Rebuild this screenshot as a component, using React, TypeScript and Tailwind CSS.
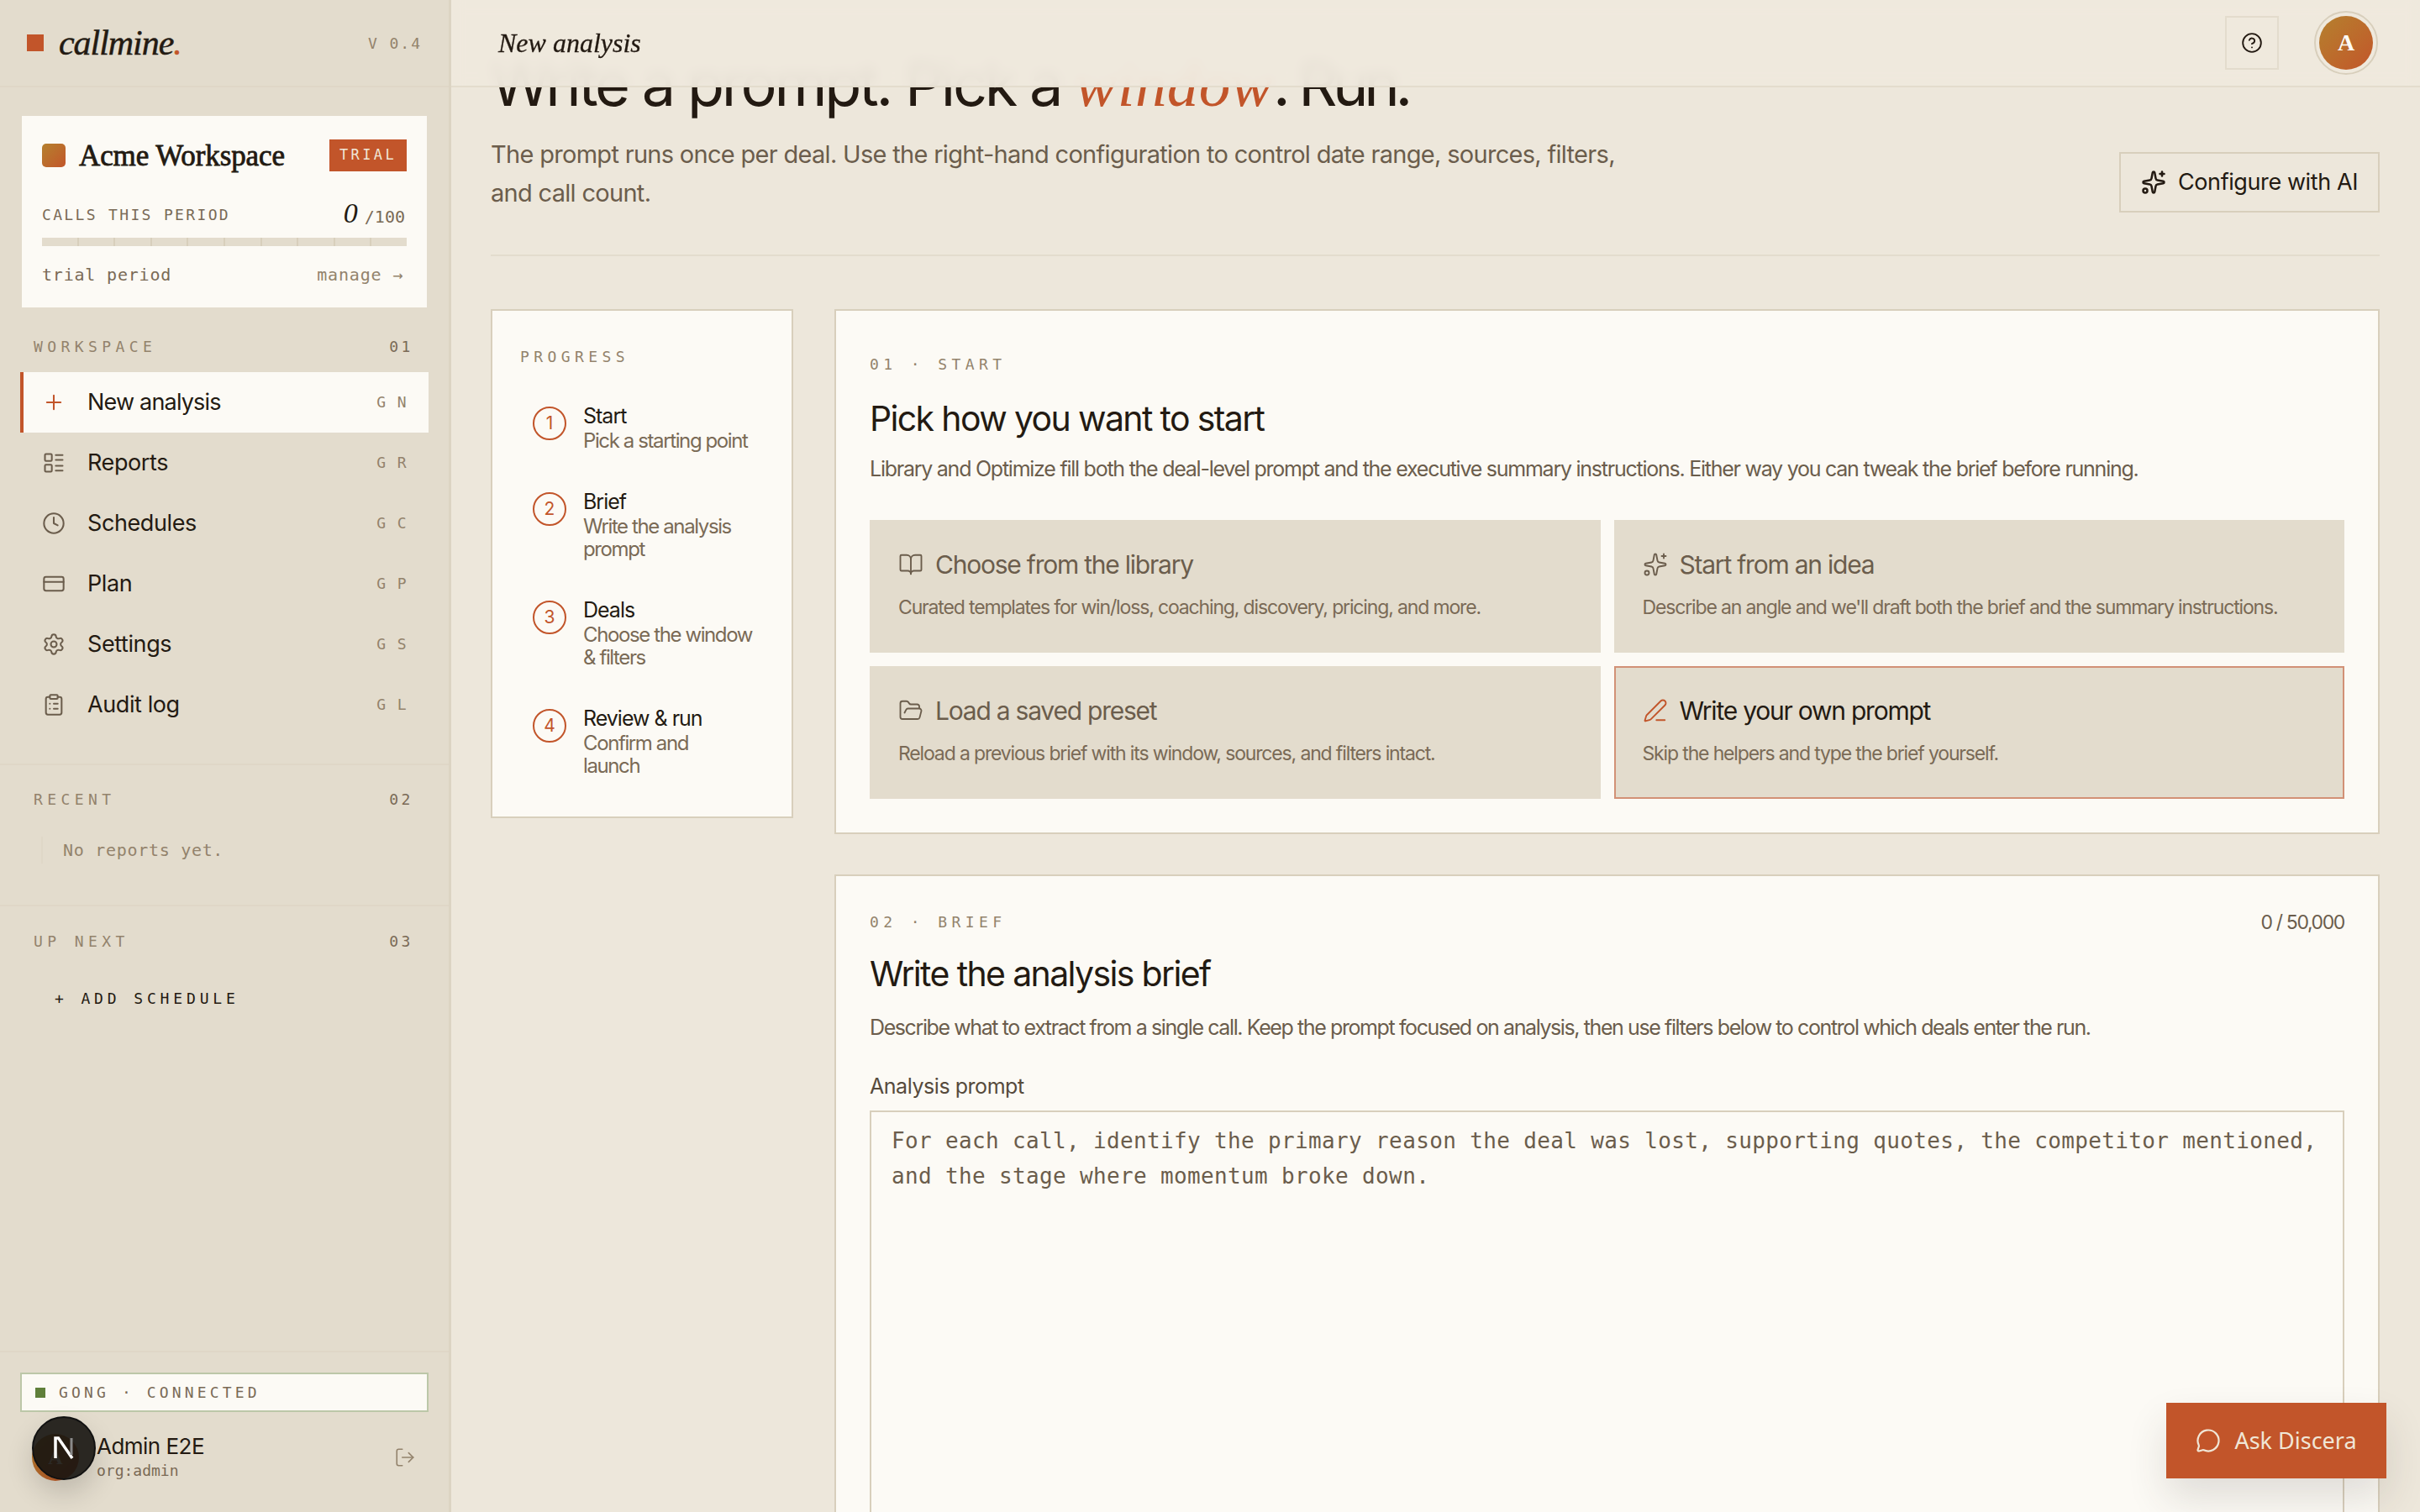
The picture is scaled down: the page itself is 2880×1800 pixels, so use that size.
import React from "react";
import {
  BookOpen,
  CircleHelp,
  ClipboardList,
  Clock,
  CreditCard,
  FolderOpen,
  LayoutList,
  LogOut,
  MessageCircle,
  PenLine,
  Plus,
  Settings,
  Sparkles,
} from "lucide-react";

const navItems = [
  { label: "Reports", keys: "G R", icon: LayoutList },
  { label: "Schedules", keys: "G C", icon: Clock },
  { label: "Plan", keys: "G P", icon: CreditCard },
  { label: "Settings", keys: "G S", icon: Settings },
  { label: "Audit log", keys: "G L", icon: ClipboardList },
];

const steps = [
  { n: 1, title: "Start", lines: ["Pick a starting point"] },
  { n: 2, title: "Brief", lines: ["Write the analysis", "prompt"] },
  { n: 3, title: "Deals", lines: ["Choose the window", "& filters"] },
  { n: 4, title: "Review & run", lines: ["Confirm and", "launch"] },
];

const options = [
  {
    title: "Choose from the library",
    text: "Curated templates for win/loss, coaching, discovery, pricing, and more.",
    icon: BookOpen,
  },
  {
    title: "Start from an idea",
    text: "Describe an angle and we'll draft both the brief and the summary instructions.",
    icon: Sparkles,
  },
  {
    title: "Load a saved preset",
    text: "Reload a previous brief with its window, sources, and filters intact.",
    icon: FolderOpen,
  },
  {
    title: "Write your own prompt",
    text: "Skip the helpers and type the brief yourself.",
    icon: PenLine,
    active: true,
  },
];

const SectionLabel = ({ label, num }: { label: string; num: string }) => (
  <div className="flex items-center justify-between pl-[40px] pr-[42px] font-['DejaVu_Sans_Mono'] text-[18px] leading-[24px] text-[#93836c]">
    <span className="tracking-[0.3em]">{label}</span>
    <span className="tracking-[0.2em] text-[#7a6a56]">{num}</span>
  </div>
);

const Sidebar = () => (
  <aside className="flex h-full w-[537px] shrink-0 flex-col border-r-[3px] border-[#dcd4c3] bg-[#e3dccd] font-['Inter']">
    <div className="flex h-[104px] shrink-0 items-center justify-between border-b-2 border-[#dfd7c7] pl-[32px] pr-[32px]">
      <div className="flex items-center gap-[18px]">
        <span className="h-[20px] w-[20px] bg-[#c2552a]" />
        <span className="font-['Liberation_Serif'] text-[42px] leading-none italic tracking-[-0.025em] text-[#231a12] [-webkit-text-stroke:0.5px_#231a12]">
          callmine<span className="text-[#c2552a] [-webkit-text-stroke:0.5px_#c2552a]">.</span>
        </span>
      </div>
      <span className="font-['DejaVu_Sans_Mono'] text-[18px] tracking-[0.11em] text-[#93836c]">V 0.4</span>
    </div>

    <div className="mx-[26px] mt-[34px] h-[228px] shrink-0 bg-[#fcfaf5] px-[24px] pt-[28px]">
      <div className="flex h-[38px] items-center justify-between">
        <div className="flex items-center gap-[16px]">
          <span className="h-[28px] w-[28px] rounded-[5px] bg-gradient-to-br from-[#b4802e] to-[#c2552a]" />
          <span className="font-['Liberation_Serif'] text-[35px] leading-none tracking-[-0.003em] text-[#231a12] [-webkit-text-stroke:0.8px_#231a12]">
            Acme Workspace
          </span>
        </div>
        <span className="flex h-[38px] w-[92px] items-center justify-center bg-[#c2552a] font-['DejaVu_Sans_Mono'] text-[17px] tracking-[0.2em] text-[#f0e6d6]">
          TRIAL
        </span>
      </div>
      <div className="mt-[33px] flex h-[36px] items-center justify-between font-['DejaVu_Sans_Mono'] text-[#7a6a56]">
        <span className="text-[18px] tracking-[0.13em]">CALLS THIS PERIOD</span>
        <span className="flex items-baseline gap-[8px] pr-[2px] text-[20px]">
          <span className="font-['Liberation_Serif'] text-[34px] leading-none italic text-[#231a12]">0</span>
          /100
        </span>
      </div>
      <div className="mt-[10px] grid h-[10px] grid-cols-10 gap-[2px] bg-[#d8cfbc]">
        {Array.from({ length: 10 }).map((_, i) => (
          <span key={i} className="bg-[#e3dccd]" />
        ))}
      </div>
      <div className="mt-[20px] flex items-center justify-between font-['DejaVu_Sans_Mono'] text-[20px] leading-[28px] tracking-[0.04em]">
        <span className="text-[#7a6a56]">trial period</span>
        <span className="pr-[4px] text-[#93836c]">manage →</span>
      </div>
    </div>

    <div className="mt-[35px]">
      <SectionLabel label="WORKSPACE" num="01" />
    </div>

    <nav className="mt-[18px] flex flex-col pr-[24px] pl-[24px]">
      <div className="flex h-[72px] items-center border-l-4 border-[#c2552a] bg-[#fcfaf5] pl-[22px] pr-[25px]">
        <Plus size={28} strokeWidth={1.75} className="text-[#c2552a]" />
        <span className="ml-[26px] flex-1 pt-[1px] text-[27px] tracking-[-0.03em] text-[#231a12]">New analysis</span>
        <span className="-mt-[2px] font-['DejaVu_Sans_Mono'] text-[18px] tracking-[0.08em] text-[#93836c]">G N</span>
      </div>
      {navItems.map((item) => (
        <div key={item.label} className="flex h-[72px] items-center pl-[26px] pr-[25px]">
          <item.icon size={28} strokeWidth={1.75} className="text-[#6b5d4c]" />
          <span className="ml-[26px] flex-1 pt-[1px] text-[27px] tracking-[-0.015em] text-[#231a12]">{item.label}</span>
          <span className="-mt-[2px] font-['DejaVu_Sans_Mono'] text-[18px] tracking-[0.08em] text-[#93836c]">{item.keys}</span>
        </div>
      ))}
    </nav>

    <div className="mt-[34px] border-t-2 border-[#dfd7c7] pt-[29px]">
      <SectionLabel label="RECENT" num="02" />
      <div className="ml-[49px] mt-[32px] flex h-[32px] items-center border-l-2 border-[#dfd7c7] pl-[24px] font-['DejaVu_Sans_Mono'] text-[20px] tracking-[0.035em] text-[#93836c]">
        No reports yet.
      </div>
    </div>

    <div className="mt-[49px] border-t-2 border-[#dfd7c7] pt-[30px]">
      <SectionLabel label="UP NEXT" num="03" />
      <div className="ml-[65px] mt-[44px] font-['DejaVu_Sans_Mono'] text-[18px] leading-[24px] tracking-[0.27em] text-[#231a12]">
        + ADD SCHEDULE
      </div>
    </div>

    <div className="flex-1" />

    <div className="h-[192px] shrink-0 border-t-2 border-[#dfd7c7] pt-[24px]">
      <div className="mx-[24px] flex h-[47px] items-center border-2 border-[#bcc7a8] bg-[#fcfaf5] pl-[16px]">
        <span className="h-[12px] w-[12px] bg-[#5f7f3a]" />
        <span className="ml-[16px] font-['DejaVu_Sans_Mono'] text-[18px] tracking-[0.23em] text-[#7a6a56]">
          GONG · CONNECTED
        </span>
      </div>
      <div className="relative mx-[38px] mt-[26px] flex h-[56px] items-center">
        <span className="flex h-[56px] w-[56px] shrink-0 items-center justify-center rounded-full bg-gradient-to-br from-[#b4802e] to-[#c2552a] font-['Liberation_Serif'] text-[24px] font-bold text-[#fcfaf5]">
          A
        </span>
        <div className="ml-[21px] flex-1">
          <div className="text-[26px] leading-[30px] tracking-[-0.02em] text-[#231a12]">Admin E2E</div>
          <div className="mt-[2px] font-['DejaVu_Sans_Mono'] text-[18px] leading-[24px] text-[#7a6a56]">org:admin</div>
        </div>
        <LogOut size={26} strokeWidth={1.5} className="mr-[1px] text-[#93836c]" />
        {/* framework dev badge sitting on top of the avatar */}
        <div className="absolute top-[-21px] left-0 flex h-[76px] w-[76px] items-center justify-center rounded-full border-2 border-[#111] bg-[#151310]/90 shadow-[0_16px_32px_rgba(0,0,0,0.16)]">
          <svg width="36" height="36" viewBox="0 0 36 36" fill="none">
            <path d="M8 30V6h3.5L28 30" stroke="#fff" strokeWidth="3.5" />
            <path d="M27 6v20" stroke="#8a8a8a" strokeWidth="3" />
          </svg>
        </div>
      </div>
    </div>
  </aside>
);

const Main = () => (
  <main className="relative h-full flex-1 overflow-hidden bg-[#ede7db] font-['Inter']">
    <header className="absolute top-0 right-0 left-0 z-10 flex h-[104px] items-center justify-between border-b-2 border-[#e3dccd] bg-[#efe9dd]/95 pr-[50px] pl-[56px] backdrop-blur-[8px]">
      <span className="font-['Liberation_Serif'] text-[32px] italic text-[#231a12] [-webkit-text-stroke:0.3px_#231a12]">New analysis</span>
      <div className="flex items-center gap-[42px]">
        <button className="flex h-[64px] w-[64px] items-center justify-center border-2 border-[#e3dccd]">
          <CircleHelp size={26} strokeWidth={1.75} className="text-[#231a12]" />
        </button>
        <div className="flex h-[76px] w-[76px] items-center justify-center rounded-full border-2 border-[#d8cfbc]">
          <span className="flex h-[64px] w-[64px] items-center justify-center rounded-full bg-gradient-to-br from-[#b4802e] to-[#c2552a] font-['Liberation_Serif'] text-[28px] font-bold text-[#fcfaf5]">
            A
          </span>
        </div>
      </div>
    </header>

    <div className="flex flex-col pl-[47px] pr-[48px]">
      <div className="flex items-end justify-between border-b-2 border-[#e3dccd] pb-[50px]">
        <div>
          <h1 className="h-[142px] pt-[62px] text-[72px] leading-[76px] tracking-[-0.045em] text-[#231a12]">
            Write a prompt. Pick a{" "}
            <em className="font-['Liberation_Serif'] text-[75px] tracking-[0.005em] text-[#c2552a]">window</em>
            <span className="tracking-[-0.075em]">. Run.</span>
          </h1>
          <p className="mt-[19px] w-[1350px] text-[29px] leading-[46px] tracking-[-0.024em] text-[#6b5d4c]">
            The prompt runs once per deal. Use the right-hand configuration to control date range, sources, filters,
            and call count.
          </p>
        </div>
        <button className="flex h-[72px] w-[310px] items-center justify-center gap-[14px] border-2 border-[#d8cfbc] text-[27px] tracking-[-0.015em] text-[#231a12]">
          <Sparkles size={30} strokeWidth={2} />
          Configure with AI
        </button>
      </div>

      <div className="mt-[63px] flex items-start gap-[49px]">
        <aside className="h-[606px] w-[360px] shrink-0 border-2 border-[#d8cfbc] bg-[#fcfaf5] pt-[43px] pl-[33px]">
          <div className="font-['DejaVu_Sans_Mono'] text-[18px] leading-[24px] tracking-[0.3em] text-[#93836c]">PROGRESS</div>
          <ol className="mt-[43px] flex flex-col gap-[44px] pl-[15px]">
            {steps.map((step) => (
              <li key={step.n} className="flex gap-[20px]">
                <span className="mt-[4px] flex h-[40px] w-[40px] shrink-0 items-center justify-center rounded-full border-2 border-[#c2552a] text-[21px] text-[#c2552a]">
                  {step.n}
                </span>
                <div>
                  <div className="text-[25px] leading-[31px] tracking-[-0.04em] text-[#231a12]">{step.title}</div>
                  {step.lines.map((line) => (
                    <div key={line} className="text-[24px] leading-[27px] tracking-[-0.058em] text-[#7a6a56]">
                      {line}
                    </div>
                  ))}
                </div>
              </li>
            ))}
          </ol>
        </aside>

        <div className="flex flex-1 flex-col gap-[48px]">
          <section className="h-[625px] border-2 border-[#d8cfbc] bg-[#fcfaf5] px-[40px] pt-[50px]">
            <div className="font-['DejaVu_Sans_Mono'] text-[18px] leading-[28px] tracking-[0.3em] text-[#93836c]">01 · START</div>
            <h2 className="mt-[25px] text-[41px] leading-[50px] tracking-[-0.04em] text-[#231a12]">Pick how you want to start</h2>
            <p className="mt-[16px] text-[25px] leading-[38px] tracking-[-0.05em] text-[#6b5d4c]">
              Library and Optimize fill both the deal-level prompt and the executive summary instructions. Either way you can tweak the brief before running.
            </p>
            <div className="mt-[42px] grid grid-cols-2 gap-x-[16px] gap-y-[16px]">
              {options.map((o) => (
                <div
                  key={o.title}
                  className={
                    o.active
                      ? "flex h-[158px] flex-col justify-center border-2 border-[#d29176] bg-[#e3dccd] px-[32px] pb-[4px]"
                      : "flex h-[158px] flex-col justify-center bg-[#e3dccd] px-[34px] pb-[4px]"
                  }
                >
                  <div className="flex items-center gap-[14px]">
                    <o.icon size={30} strokeWidth={1.5} className={o.active ? "text-[#c2552a]" : "text-[#6b5d4c]"} />
                    <span
                      className={
                        o.active
                          ? "text-[30px] leading-[40px] tracking-[-0.041em] text-[#231a12]"
                          : "text-[30px] leading-[40px] tracking-[-0.041em] text-[#6b5d4c]"
                      }
                    >
                      {o.title}
                    </span>
                  </div>
                  <p className="mt-[14px] text-[23px] leading-[34px] tracking-[-0.05em] text-[#7a6a56]">{o.text}</p>
                </div>
              ))}
            </div>
          </section>

          <section className="border-2 border-[#d8cfbc] bg-[#fcfaf5] px-[40px] pt-[38px] pb-[100px]">
            <div className="flex items-center justify-between">
              <span className="font-['DejaVu_Sans_Mono'] text-[18px] leading-[28px] tracking-[0.3em] text-[#93836c]">02 · BRIEF</span>
              <span className="text-[23px] tracking-[-0.06em] text-[#6b5d4c]">0 / 50,000</span>
            </div>
            <h2 className="mt-[18px] text-[41px] leading-[50px] tracking-[-0.04em] text-[#231a12]">Write the analysis brief</h2>
            <p className="mt-[20px] text-[25px] leading-[38px] tracking-[-0.056em] text-[#6b5d4c]">
              Describe what to extract from a single call. Keep the prompt focused on analysis, then use filters below to control which deals enter the run.
            </p>
            <label className="mt-[34px] block text-[25px] leading-[34px] tracking-[-0.018em] text-[#564a3c]">Analysis prompt</label>
            <div className="mt-[12px] h-[560px] border-2 border-[#d8cfbc] px-[24px] pt-[13px] font-['DejaVu_Sans_Mono'] text-[26px] leading-[42.6px] tracking-[0.35px] text-[#6b5d4c]">
              For each call, identify the primary reason the deal was lost, supporting quotes, the competitor mentioned,
              and the stage where momentum broke down.
            </div>
          </section>
        </div>
      </div>
    </div>
  </main>
);

export default function App() {
  return (
    <div className="relative flex h-screen w-screen overflow-hidden">
      <Sidebar />
      <Main />
      <button className="absolute top-[1670px] left-[2578px] z-20 flex h-[90px] w-[262px] items-center justify-center gap-[16px] bg-[#c2552a] text-[27px] text-[#f0e6d6] shadow-[0_24px_48px_rgba(60,50,40,0.14)]">
        <MessageCircle size={30} strokeWidth={1.75} />
        Ask Discera
      </button>
    </div>
  );
}
